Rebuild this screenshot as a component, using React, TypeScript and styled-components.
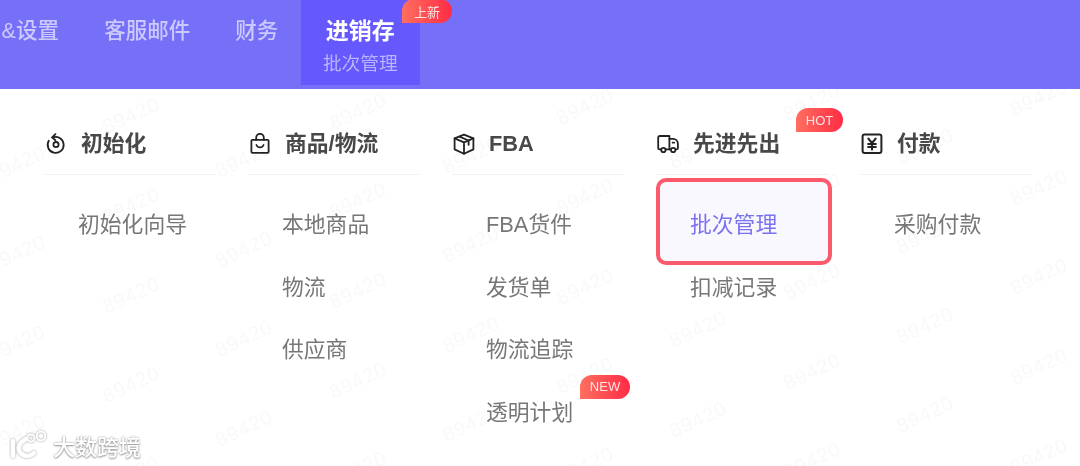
import React from 'react'
import styled, { createGlobalStyle } from 'styled-components'

const GlobalStyle = createGlobalStyle`
	html, body {
		margin: 0;
		padding: 0;
		background: #fff;
	}
	body {
		font-family: 'Liberation Sans', 'Noto Sans CJK SC', sans-serif;
	}
`

const Page = styled.div`
	position: relative;
	width: 1080px;
	height: 466px;
	overflow: hidden;
	background: #fff;
	filter: blur(0.35px);
`

const TopBar = styled.div`
	position: relative;
	z-index: 2;
	display: flex;
	align-items: flex-start;
	height: 89px;
	margin-left: -21px;
	background: #766ff7;
`

const Tab = styled.div<{ $active?: boolean }>`
	position: relative;
	display: flex;
	flex-direction: column;
	align-items: center;
	height: 85px;
	padding: 0 ${({ $active }) => ($active ? '22px' : '22.6px')};
	box-sizing: border-box;
	background: ${({ $active }) => ($active ? '#6558fd' : 'transparent')};
`

const TabLabel = styled.div<{ $active?: boolean }>`
	margin-top: 13px;
	font-size: ${({ $active }) => ($active ? '23px' : '21.5px')};
	line-height: 36px;
	font-weight: ${({ $active }) => ($active ? 700 : 500)};
	white-space: nowrap;
	color: ${({ $active }) => ($active ? '#fff' : '#cbc9fd')};
`

const TabSub = styled.div`
	margin-top: 1px;
	font-size: 18.7px;
	line-height: 28px;
	white-space: nowrap;
	color: #b9b4fe;
`

const Badge = styled.span<{ $top: number; $left: number; $width?: number }>`
	position: absolute;
	top: ${({ $top }) => $top}px;
	left: ${({ $left }) => $left}px;
	z-index: 3;
	display: flex;
	align-items: center;
	justify-content: center;
	width: ${({ $width }) => $width ?? 50}px;
	height: 24px;
	border-radius: 12px 12px 12px 0;
	background: linear-gradient(90deg, #ff6f5f, #ff2c46);
	font-size: 13px;
	color: #ffe4e2;
`

const Menu = styled.div`
	position: relative;
	z-index: 2;
	display: flex;
	gap: 32px;
	padding: 25px 0 0 44px;
`

const Column = styled.div`
	position: relative;
	width: 172px;
	flex-shrink: 0;
`

const ColumnHead = styled.div`
	display: flex;
	align-items: center;
	gap: 14px;
	height: 60px;
	padding-left: 1px;
	border-bottom: 1px solid #f1f1f3;
	svg {
		flex-shrink: 0;
		width: 22px;
		height: 22px;
		margin-top: -1px;
		fill: none;
		stroke: #222;
		stroke-width: 1.8;
		stroke-linecap: round;
		stroke-linejoin: round;
	}
`

const ColumnTitle = styled.span`
	font-size: 21.8px;
	line-height: 30px;
	font-weight: 700;
	color: #484848;
`

const ItemList = styled.div`
	margin-top: 18px;
`

const Item = styled.div<{ $selected?: boolean }>`
	position: relative;
	display: flex;
	align-items: center;
	height: 62.7px;
	padding: 1px 0 0 34px;
	box-sizing: border-box;
	font-size: 21.8px;
	line-height: 30px;
	white-space: nowrap;
	color: ${({ $selected }) => ($selected ? '#7a72ee' : '#777')};
	&::before {
		content: '';
		display: ${({ $selected }) => ($selected ? 'block' : 'none')};
		position: absolute;
		top: -15px;
		left: 0;
		width: 176px;
		height: 87px;
		box-sizing: border-box;
		border: 4px solid #fb5a6d;
		border-radius: 10px;
		background: #f9f8ff;
		z-index: -1;
	}
`

const Watermark = styled.span<{ $x: number; $y: number }>`
	position: absolute;
	left: ${({ $x }) => $x}px;
	top: ${({ $y }) => $y}px;
	z-index: 1;
	font-size: 20px;
	letter-spacing: 1px;
	line-height: 1;
	color: #f9f9fa;
	transform: translate(-50%, -50%) rotate(-25deg);
`

const Credit = styled.div`
	position: absolute;
	left: 9px;
	bottom: 5px;
	z-index: 4;
	display: flex;
	align-items: center;
	gap: 4px;
	font-size: 22px;
	font-weight: 500;
	color: #fff;
	text-shadow: 0 0 2px #999, 0 1px 2px #999;
	svg {
		width: 40px;
		height: 32px;
		fill: none;
		stroke: #fff;
		stroke-linecap: round;
		filter: drop-shadow(0 0 1px #999);
	}
`

const RestartIcon = () => (
	<svg viewBox="0 0 22 22">
		<path d="M7.4 4.6a8 8 0 1 1-3.6 3.2" />
		<path d="M10.4 1.2 7.2 4.4l3.2 2.8" />
		<circle cx="11" cy="11.6" r="2.6" />
	</svg>
)

const BagIcon = () => (
	<svg viewBox="0 0 22 22">
		<rect x="2.4" y="6.8" width="17.2" height="13" rx="1" />
		<path d="M7.2 6.8V4.6a3.8 3.8 0 0 1 7.6 0v2.2" />
		<path d="M7.4 12a3.9 3.9 0 0 0 7.2 0" />
	</svg>
)

const BoxIcon = () => (
	<svg viewBox="0 0 22 22">
		<path d="M11 1.6 20.4 5.4v11L11 20.8 1.6 16.4v-11z" />
		<path d="M1.6 5.4 11 9.4l9.4-4M11 9.4v11.4" />
		<path d="M6.4 3.6 15.6 7.5v4.3" />
	</svg>
)

const TruckIcon = () => (
	<svg viewBox="0 0 22 22">
		<path d="M4.2 16.4H2.8a1.6 1.6 0 0 1-1.6-1.6V4.6A1.6 1.6 0 0 1 2.8 3h9.6v13.4H8.6" />
		<path d="M12.4 5.8h3.6c3 0 4.9 2.4 4.9 5.2v3.9a1.5 1.5 0 0 1-1.5 1.5h-.6M14.2 16.4h-1.8" />
		<path d="M15.6 9.6h1.6" />
		<circle cx="6.4" cy="17" r="2.2" />
		<circle cx="16.2" cy="17" r="2.2" />
	</svg>
)

const YuanIcon = () => (
	<svg viewBox="0 0 22 22">
		<rect x="1.6" y="1.6" width="18.8" height="18.4" rx="2" strokeWidth="2" />
		<path d="m7.4 5.6 3.6 4.6 3.6-4.6M7.2 11h7.6M7.2 14h7.6M11 10.2v6.4" strokeWidth="2.1" />
	</svg>
)

const LogoMark = () => (
	<svg viewBox="0 0 40 32">
		<path d="M4 12v15" strokeWidth="4.5" />
		<path d="M17 10c-7 4-9 9-6 13 3 5 10 5 14 1" strokeWidth="4.5" />
		<circle cx="22" cy="9" r="3.6" strokeWidth="2" />
		<circle cx="32" cy="7" r="4.4" strokeWidth="2" />
	</svg>
)

const columns = [
	{ title: '初始化', icon: <RestartIcon />, items: ['初始化向导'] },
	{ title: '商品/物流', icon: <BagIcon />, items: ['本地商品', '物流', '供应商'] },
	{ title: 'FBA', icon: <BoxIcon />, items: ['FBA货件', '发货单', '物流追踪', '透明计划'] },
	{ title: '先进先出', icon: <TruckIcon />, items: ['批次管理', '扣减记录'], selected: '批次管理' },
	{ title: '付款', icon: <YuanIcon />, items: ['采购付款'] },
]

// the faint id stamp is tiled in staggered columns, with a slight upward drift
const stamps: { x: number; y: number }[] = []
for (let col = 0; col < 10; col++) {
	const x = 17 + col * 113.5
	const start = (col % 2 ? 118 : 164) - x * 0.02
	for (let row = 0; row < 5; row++) {
		stamps.push({ x, y: start + row * 89.6 })
	}
}

export default function App() {
	return (
		<Page>
			<GlobalStyle />
			<TopBar>
				<Tab>
					<TabLabel>&amp;设置</TabLabel>
				</Tab>
				<Tab>
					<TabLabel>客服邮件</TabLabel>
				</Tab>
				<Tab>
					<TabLabel>财务</TabLabel>
				</Tab>
				<Tab $active>
					<TabLabel $active>进销存</TabLabel>
					<TabSub>批次管理</TabSub>
					<Badge $top={-1} $left={101}>
						上新
					</Badge>
				</Tab>
			</TopBar>
			{stamps.map((s, i) => (
				<Watermark key={i} $x={s.x} $y={s.y}>
					89420
				</Watermark>
			))}
			<Menu>
				{columns.map(col => (
					<Column key={col.title}>
						<ColumnHead>
							{col.icon}
							<ColumnTitle>{col.title}</ColumnTitle>
						</ColumnHead>
						{col.title === '先进先出' && (
							<Badge $top={-6} $left={140} $width={47}>
								HOT
							</Badge>
						)}
						<ItemList>
							{col.items.map(item => (
								<Item key={item} $selected={item === col.selected}>
									{item}
									{item === '透明计划' && (
										<Badge $top={-6} $left={128}>
											NEW
										</Badge>
									)}
								</Item>
							))}
						</ItemList>
					</Column>
				))}
			</Menu>
			<Credit>
				<LogoMark />
				大数跨境
			</Credit>
		</Page>
	)
}
